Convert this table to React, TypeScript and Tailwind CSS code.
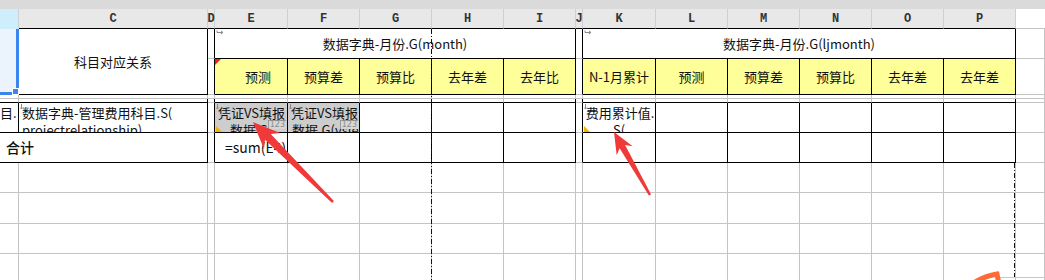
import React from "react";

const RC: Record<string, string> = {
  g: "border-r border-r-[#c4c4c4]",
  k: "border-r border-r-black",
  b: "border-r-[3px] border-r-[#3a86ee]",
  h: "border-r border-r-[#d0d0d0]",
  x: "",
};
const BC: Record<string, string> = {
  g: "border-b border-b-[#c4c4c4]",
  k: "border-b border-b-black",
  b: "border-b-[3px] border-b-[#3a86ee]",
  n: "border-b border-b-[#cdeefa]",
};

function Cell({
  r = "g",
  b = "g",
  className = "",
  children,
}: {
  r?: string;
  b?: string;
  className?: string;
  children?: React.ReactNode;
}) {
  return <div className={`relative box-border min-w-0 ${RC[r]} ${BC[b]} ${className}`}>{children}</div>;
}

function RedTri() {
  return (
    <svg className="absolute left-0 top-0" width="6" height="6">
      <polygon points="0,0 6,0 0,6" fill="#ff1a1a" />
    </svg>
  );
}
function YelTri() {
  return (
    <svg className="absolute left-[1px] bottom-0" width="6" height="6">
      <polygon points="0,0 0,6 6,6" fill="#f2b400" />
    </svg>
  );
}
function ArrMark() {
  return (
    <svg className="absolute left-[1px] top-[1px]" width="8" height="5">
      <path d="M1 0.5V2.5H7M5 1L7 2.5L5 4" stroke="#8a8a8a" fill="none" strokeWidth="1" />
    </svg>
  );
}
function DownMark() {
  return (
    <svg className="absolute left-[1px] top-[1px]" width="5" height="6">
      <path d="M1.5 0V5M0 3.5L1.5 5L3 3.5" stroke="#8a8a8a" fill="none" strokeWidth="1" />
    </svg>
  );
}
function Num() {
  return (
    <span className="absolute right-[1px] top-[17px] border-t border-l border-[#9a9a9a] bg-[#d6d6d6] px-[1px] font-['DejaVu_Sans',sans-serif] text-[8px] leading-[8px] text-[#8a8a8a]">
      123
    </span>
  );
}

function arrow(tx: number, ty: number, sx: number, sy: number, k = 1) {
  const dx = sx - tx;
  const dy = sy - ty;
  const L = Math.hypot(dx, dy);
  const ux = dx / L;
  const uy = dy / L;
  const px = -uy;
  const py = ux;
  const P = (a: number, w: number) => `${(tx + ux * a + px * w).toFixed(1)},${(ty + uy * a + py * w).toFixed(1)}`;
  const H = 27 * k;
  const N = 21 * k;
  const W = 11.5 * k;
  const S = 4 * k;
  return [
    P(0, 0),
    P(H, W),
    P(N, S),
    `${(sx + px * 1.3).toFixed(1)},${(sy + py * 1.3).toFixed(1)}`,
    `${(sx - px * 1.3).toFixed(1)},${(sy - py * 1.3).toFixed(1)}`,
    P(N, -S),
    P(H, -W),
  ].join(" ");
}

const letters = ["C", "D", "E", "F", "G", "H", "I", "J", "K", "L", "M", "N", "O", "P"];
const blank = Array.from({ length: 16 }, (_, i) => i);

export default function App() {
  return (
    <div className="relative h-[280px] w-[1045px] overflow-hidden bg-white font-['Noto_Sans_CJK_SC',sans-serif] text-[13px] text-[#111]">
      <div className="h-[9px] bg-[#dadada]" />
      <div className="grid grid-cols-[19px_189px_7px_73px_72px_72px_72px_72px_7px_73px_72px_72px_72px_72px_72px_1fr] grid-rows-[20px_30px_36px_4px_4px_30px_30px_30px_31px_30px_30px]">
        {/* column header */}
        <Cell r="h" b="n" className="bg-[#cdeefa]" />
        {letters.map((l) => (
          <Cell
            key={l}
            r="h"
            b="k"
            className="flex items-center justify-center overflow-visible bg-[#e8e8e8] font-['Liberation_Mono',monospace] text-[12px] font-bold leading-none text-[#333]"
          >
            {l}
          </Cell>
        ))}
        <Cell r="x" b="g" className="bg-white" />

        {/* row 1 */}
        <Cell r="b" b="b" className="row-span-2 bg-[#ebf4fd]">
          <div className="absolute -right-[2px] -bottom-[2px] z-20 h-[5px] w-[5px] bg-[#3a86ee] outline outline-1 outline-white" />
        </Cell>
        <Cell r="k" b="k" className="row-span-2 flex items-center justify-center overflow-hidden">
          科目对应关系
        </Cell>
        <Cell r="k" b="g" />
        <Cell r="k" b="k" className="col-span-5 flex items-center justify-center overflow-hidden">
          <ArrMark />
          数据字典-月份.G(month)
        </Cell>
        <Cell r="k" b="g" />
        <Cell r="k" b="k" className="col-span-6 flex items-center justify-center overflow-hidden">
          <ArrMark />
          数据字典-月份.G(ljmonth)
        </Cell>
        <Cell />

        {/* row 2 */}
        <Cell r="k" b="g" />
        <Cell r="k" b="k" className="flex items-center justify-center bg-[#ffff99] pl-[14px]">
          <RedTri />
          预测
        </Cell>
        {["预算差", "预算比", "去年差", "去年比"].map((t) => (
          <Cell key={t} r="k" b="k" className="flex items-center justify-center bg-[#ffff99]">
            {t}
          </Cell>
        ))}
        <Cell r="k" b="g" />
        {["N-1月累计", "预测", "预算差", "预算比", "去年差", "去年差 "].map((t) => (
          <Cell key={t} r="k" b="k" className="flex items-center justify-center overflow-hidden whitespace-nowrap bg-[#ffff99]">
            {t}
          </Cell>
        ))}
        <Cell />

        {/* thin rows */}
        {blank.map((i) => (
          <Cell key={`ta${i}`} />
        ))}
        <Cell b="k" />
        <Cell r="k" b="k" />
        <Cell r="k" />
        <Cell b="k" />
        <Cell b="k" />
        <Cell b="k" />
        <Cell b="k" />
        <Cell r="k" b="k" />
        <Cell r="k" />
        <Cell b="k" />
        <Cell b="k" />
        <Cell b="k" />
        <Cell b="k" />
        <Cell b="k" />
        <Cell r="k" b="k" />
        <Cell />

        {/* row 3 */}
        <Cell r="k" b="k" className="overflow-hidden whitespace-nowrap pr-[5px] pt-[1px] text-right leading-[17px]">
          目.
        </Cell>
        <Cell r="k" b="k" className="overflow-hidden pl-[3px] pt-[1px] leading-[17px]">
          <DownMark />
          <div className="whitespace-nowrap">数据字典-管理费用科目.S(</div>
          <div className="whitespace-nowrap">projectrelationship)</div>
        </Cell>
        <Cell r="k" b="g" />
        <Cell r="k" b="k" className="overflow-hidden bg-[#cdcdcd] pt-[1px] text-center leading-[17px]">
          <DownMark />
          <div className="whitespace-nowrap pl-[3px] text-left">凭证VS填报</div>
          <div className="whitespace-nowrap">数据.S(</div>
          <Num />
          <YelTri />
        </Cell>
        <Cell r="k" b="k" className="overflow-hidden bg-[#cdcdcd] pt-[1px] leading-[17px]">
          <DownMark />
          <div className="whitespace-nowrap pl-[3px]">凭证VS填报</div>
          <div className="whitespace-nowrap pl-[4px]">数据.G(vsie</div>
          <Num />
        </Cell>
        <Cell r="k" b="k" />
        <Cell r="k" b="k" />
        <Cell r="k" b="k" />
        <Cell r="k" b="g" />
        <Cell r="k" b="k" className="overflow-hidden pt-[1px] text-center leading-[17px]">
          <DownMark />
          <div className="whitespace-nowrap pl-[2px]">费用累计值.</div>
          <div className="whitespace-nowrap">S(</div>
          <YelTri />
        </Cell>
        <Cell r="k" b="k" />
        <Cell r="k" b="k" />
        <Cell r="k" b="k" />
        <Cell r="k" b="k" />
        <Cell r="k" b="k" />
        <Cell />

        {/* row 4 */}
        <Cell r="k" b="k" className="col-span-2 flex items-center pl-[6px] text-[14px] font-medium">
          合计
        </Cell>
        <Cell r="k" b="g" />
        <Cell r="k" b="k" className="flex items-center overflow-hidden whitespace-nowrap pl-[10px] text-[14px]">
          =sum(E4)
        </Cell>
        <Cell r="k" b="k" />
        <Cell r="k" b="k" />
        <Cell r="k" b="k" />
        <Cell r="k" b="k" />
        <Cell r="k" b="g" />
        <Cell r="k" b="k" />
        <Cell r="k" b="k" />
        <Cell r="k" b="k" />
        <Cell r="k" b="k" />
        <Cell r="k" b="k" />
        <Cell r="k" b="k" />
        <Cell />

        {/* rows 5-8 */}
        {[5, 6, 7, 8].map((rw) => blank.map((i) => <Cell key={`r${rw}-${i}`} />))}
      </div>

      {/* page-break lines */}
      <div className="absolute left-[431px] top-[29px] h-[251px] w-px bg-[repeating-linear-gradient(to_bottom,#111_0px,#111_5px,transparent_5px,transparent_7px,#111_7px,#111_8px,transparent_8px,transparent_10px)]" />
      <div className="absolute left-[1014px] top-[163px] h-[114px] w-px bg-[repeating-linear-gradient(to_bottom,#111_0px,#111_5px,transparent_5px,transparent_7px,#111_7px,#111_8px,transparent_8px,transparent_10px)]" />

      {/* annotations */}
      <svg className="pointer-events-none absolute left-0 top-0 z-30" width="1045" height="280">
        <polygon points={arrow(253, 122, 333, 202)} fill="#f03a3a" />
        <polygon points={arrow(614, 132, 650, 195, 0.8)} fill="#f03a3a" />
        <line x1="1000" y1="277.5" x2="1045" y2="277.5" stroke="#b7cbe4" strokeWidth="1" />
        <path d="M972 284 Q984 276 997 274 L999 284" stroke="#ff6b35" strokeWidth="5" fill="none" strokeLinecap="round" />
      </svg>
    </div>
  );
}
